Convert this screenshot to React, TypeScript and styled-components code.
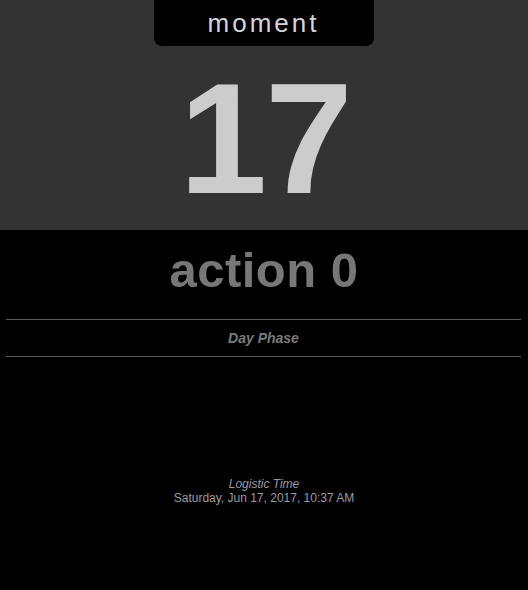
import React from "react";
import styled, { createGlobalStyle } from "styled-components";

const Global = createGlobalStyle`
  html, body { margin: 0; padding: 0; background: #000; }
  body { font-family: "Liberation Sans", Arial, sans-serif; }
`;

const Page = styled.div`
  width: 528px;
  height: 590px;
  background: #000;
  display: flex;
  flex-direction: column;
`;

const Header = styled.div`
  height: 230px;
  background: #333;
  display: flex;
  flex-direction: column;
  align-items: center;
`;

const Tab = styled.div`
  width: 220px;
  height: 46px;
  background: #000;
  border-radius: 0 0 8px 8px;
  display: flex;
  align-items: center;
  justify-content: center;
  color: #d4d4dc;
  font-size: 26px;
  letter-spacing: 3px;
  padding-right: 1px;
  box-sizing: border-box;
`;

const BigNumber = styled.div`
  margin-top: 13px;
  font-size: 158px;
  line-height: 1;
  font-weight: bold;
  color: #cccccc;
  letter-spacing: -2px;
  padding-left: 2px;
`;

const Action = styled.div`
  margin-top: 16px;
  text-align: center;
  font-size: 49px;
  line-height: 1;
  font-weight: bold;
  color: #777;
  letter-spacing: 0.5px;
`;

const Phase = styled.div`
  margin: 24px 7px 0 6px;
  border-top: 1px solid #5a5a5a;
  border-bottom: 1px solid #5a5a5a;
  height: 36px;
  line-height: 36px;
  text-align: center;
  font-size: 14px;
  font-weight: bold;
  font-style: italic;
  color: #7a7a7a;
`;

const Logistic = styled.div`
  margin-top: 120px;
  display: flex;
  flex-direction: column;
  align-items: center;
  color: #9a9aa0;
  font-size: 12px;
  line-height: 14px;
`;

const LogisticLabel = styled.div`
  font-style: italic;
`;

export default function App() {
  return (
    <Page>
      <Global />
      <Header>
        <Tab>moment</Tab>
        <BigNumber>17</BigNumber>
      </Header>
      <Action>action 0</Action>
      <Phase>Day Phase</Phase>
      <Logistic>
        <LogisticLabel>Logistic Time</LogisticLabel>
        <div>Saturday, Jun 17, 2017, 10:37 AM</div>
      </Logistic>
    </Page>
  );
}
